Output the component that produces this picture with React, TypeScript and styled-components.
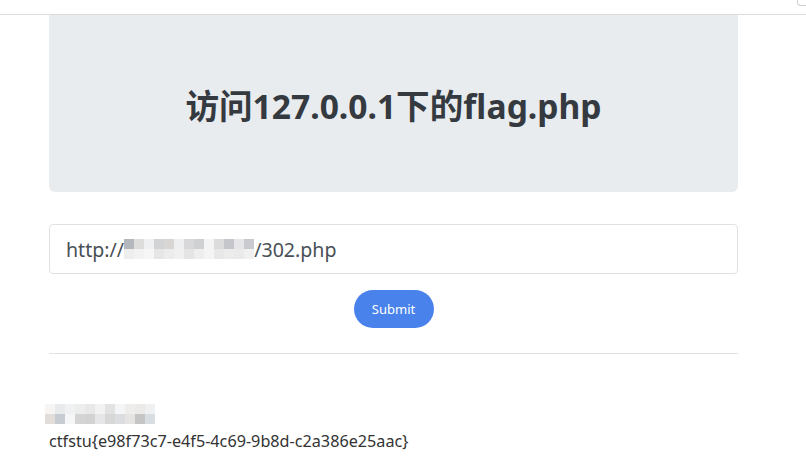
import React from "react";
import styled, { createGlobalStyle } from "styled-components";

const GlobalStyle = createGlobalStyle`
  body {
    margin: 0;
    background: #ffffff;
    font-family: "Noto Sans", "Noto Sans CJK SC", sans-serif;
  }
`;

const inputBlur = [
  ["#b4b8bd", "#dddddb", "#eef0f2", "#d2d3d5", "#d8d6d4", "#eeeff0", "#d8d8da", "#cfd0d2", "#f4f4f4", "#dcdcdc", "#c4c6cc", "#e6e6e8", "#c8cacf"],
  ["#eeeeee", "#f2f2f2", "#f6f6f6", "#e6e6e6", "#ececec", "#f0f0f0", "#e4e4e4", "#eeeeee", "#f4f4f4", "#e8e8e8", "#ececec", "#eaeaea", "#f0f0f0"],
];

const nameBlur = [
  ["#f6f5f3", "#e8eaeb", "#f0f1f2", "#eceded", "#e8e8e8", "#f2f2f2", "#e2e2e3", "#f4f5f7", "#eeedeb", "#ebeae8", "#eff0f2"],
  ["#e3ddd9", "#c7ccd3", "#f5f7f6", "#d4d4d4", "#d2d2d2", "#e6e6e8", "#d7d7d8", "#dcdde0", "#e6e4e2", "#c5c5c5", "#d8dde1"],
];

function Mosaic({ rows, cell }: { rows: string[][]; cell: number }) {
  return (
    <MosaicGrid $cols={rows[0].length} $cell={cell}>
      {rows.flat().map((c, i) => (
        <MosaicCell key={i} style={{ background: c }} />
      ))}
    </MosaicGrid>
  );
}

export default function App() {
  return (
    <>
      <GlobalStyle />
      <TopBar>
        <Corner />
      </TopBar>
      <Container>
        <Jumbotron>
          <Title>访问127.0.0.1下的flag.php</Title>
        </Jumbotron>
        <Form>
          <UrlInput>
            <span>http://</span>
            <Mosaic rows={inputBlur} cell={10} />
            <span>/302.php</span>
          </UrlInput>
          <SubmitButton>Submit</SubmitButton>
        </Form>
        <Divider />
        <Result>
          <ResultName>
            <Mosaic rows={nameBlur} cell={10} />
          </ResultName>
          <FlagText>ctfstu{"{"}e98f73c7-e4f5-4c69-9b8d-c2a386e25aac{"}"}</FlagText>
        </Result>
      </Container>
    </>
  );
}

const TopBar = styled.div`
  height: 14px;
  border-bottom: 1px solid #dcdcdc;
  display: flex;
  justify-content: flex-end;
`;

const Corner = styled.div`
  width: 8px;
  height: 5px;
  border-left: 1px solid #d0d0d0;
  border-bottom: 1px solid #d0d0d0;
  border-bottom-left-radius: 4px;
`;

const Container = styled.div`
  width: 689px;
  margin-left: 49px;
`;

const Jumbotron = styled.div`
  height: 177px;
  background: #e9ecef;
  border-radius: 0 0 6px 6px;
  display: flex;
  align-items: center;
  justify-content: center;
`;

const Title = styled.h1`
  margin: 0 0 -1px;
  font-size: 33.6px;
  font-weight: 700;
  color: #343a40;
`;

const Form = styled.div`
  margin-top: 32px;
  display: flex;
  flex-direction: column;
  align-items: center;
`;

const UrlInput = styled.div`
  box-sizing: border-box;
  width: 100%;
  height: 50px;
  border: 1px solid #dfe2e5;
  border-radius: 4px;
  padding: 0 16px;
  display: flex;
  align-items: center;
  font-size: 19.6px;
  color: #495057;
`;

const MosaicGrid = styled.div<{ $cols: number; $cell: number }>`
  display: grid;
  grid-template-columns: repeat(${(p) => p.$cols}, ${(p) => p.$cell}px);
  grid-auto-rows: ${(p) => p.$cell}px;
`;

const MosaicCell = styled.div``;

const SubmitButton = styled.button`
  margin-top: 16px;
  width: 80px;
  height: 38px;
  border: none;
  border-radius: 19px;
  background: #4a82ec;
  color: #ffffff;
  font-family: "Noto Sans", sans-serif;
  font-size: 13px;
`;

const Divider = styled.hr`
  margin: 25px 0 0;
  border: none;
  border-top: 1px solid #e2e2e2;
`;

const Result = styled.div`
  padding-top: 50px;
`;

const ResultName = styled.div`
  margin-left: -4px;
`;

const FlagText = styled.div`
  margin-top: 6px;
  font-size: 16.2px;
  color: #333333;
`;
